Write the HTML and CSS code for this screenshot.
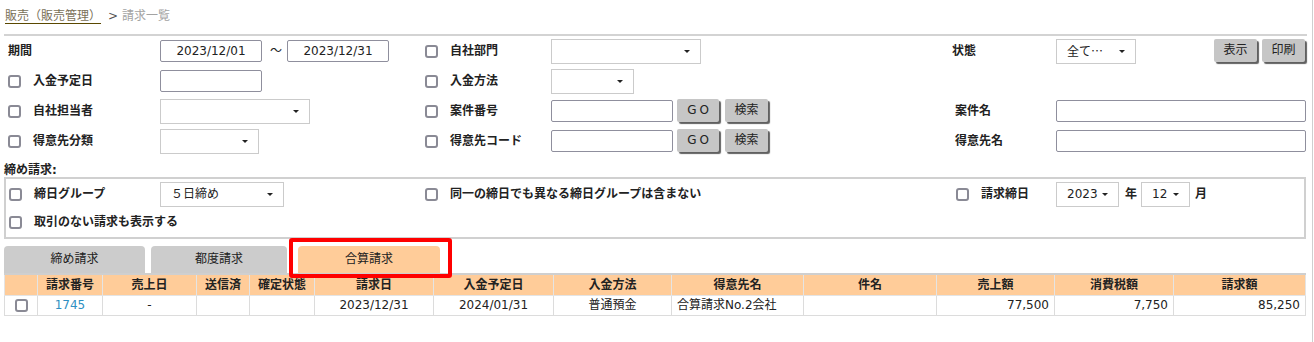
FILE: index.html
```html
<!DOCTYPE html>
<html lang="ja">
<head>
<meta charset="utf-8">
<title>請求一覧</title>
<link rel="stylesheet" href="styles.css">
</head>
<body>
<div class="page">
  <div class="crumbs">
    <a class="crumb-link">販売（販売管理）</a><span class="sep">&gt;</span><span class="crumb-cur">請求一覧</span>
  </div>
  <div class="rule"></div>

  <div class="filters">
    <!-- row 1 -->
    <div class="cell pad4"><span class="label">期間</span></div>
    <div class="cell">
      <div class="inp date">2023/12/01</div><span class="tilde">～</span><div class="inp date">2023/12/31</div>
    </div>
    <div class="cell pad4"><span class="chk"></span><span class="label">自社部門</span></div>
    <div class="cell"><div class="sel w150"></div></div>
    <div class="cell pad4"><span class="label">状態</span></div>
    <div class="cell between">
      <div class="sel w80"><span class="cjk">全て…</span></div>
      <div class="btns"><div class="btn w43">表示</div><div class="btn w43">印刷</div></div>
    </div>

    <!-- row 2 -->
    <div class="cell pad4"><span class="chk"></span><span class="label">入金予定日</span></div>
    <div class="cell"><div class="inp date"></div></div>
    <div class="cell pad4"><span class="chk"></span><span class="label">入金方法</span></div>
    <div class="cell"><div class="sel w83"></div></div>
    <div class="cell"></div>
    <div class="cell"></div>

    <!-- row 3 -->
    <div class="cell pad4"><span class="chk"></span><span class="label">自社担当者</span></div>
    <div class="cell"><div class="sel w150"></div></div>
    <div class="cell pad4"><span class="chk"></span><span class="label">案件番号</span></div>
    <div class="cell"><div class="inp w122"></div><div class="btn go">GO</div><div class="btn w43 search">検索</div></div>
    <div class="cell pad7"><span class="label">案件名</span></div>
    <div class="cell"><div class="inp wfull"></div></div>

    <!-- row 4 -->
    <div class="cell pad4"><span class="chk"></span><span class="label">得意先分類</span></div>
    <div class="cell"><div class="sel w99"></div></div>
    <div class="cell pad4"><span class="chk"></span><span class="label">得意先コード</span></div>
    <div class="cell"><div class="inp w122"></div><div class="btn go">GO</div><div class="btn w43 search">検索</div></div>
    <div class="cell pad7"><span class="label">得意先名</span></div>
    <div class="cell"><div class="inp wfull"></div></div>
  </div>

  <div class="section-title">締め請求:</div>
  <div class="closing">
    <div class="cell pad3"><span class="chk"></span><span class="label">締日グループ</span></div>
    <div class="cell"><div class="sel w124">５日締め</div></div>
    <div class="cell pad4 span2"><span class="chk"></span><span class="label">同一の締日でも異なる締日グループは含まない</span></div>
    <div class="cell pad8"><span class="chk"></span><span class="label">請求締日</span></div>
    <div class="cell">
      <div class="sel w63">2023</div><span class="label unit-y">年</span><div class="sel w49">12</div><span class="label unit-m">月</span>
    </div>
    <div class="cell pad3 span6"><span class="chk"></span><span class="label">取引のない請求も表示する</span></div>
  </div>

  <div class="tabs">
    <div class="tab t1">締め請求</div>
    <div class="tab t2">都度請求</div>
    <div class="tab t3 active">合算請求<span class="highlight"></span></div>
  </div>

  <table class="list">
    <colgroup>
      <col class="c33"><col class="c65"><col class="c94"><col class="c53"><col class="c65">
      <col class="c119"><col class="c120"><col class="c118"><col class="c132"><col class="c133">
      <col class="c118"><col class="c119"><col class="c132">
    </colgroup>
    <thead>
      <tr>
        <th></th><th>請求番号</th><th>売上日</th><th>送信済</th><th>確定状態</th><th>請求日</th><th>入金予定日</th><th>入金方法</th><th>得意先名</th><th>件名</th><th>売上額</th><th>消費税額</th><th>請求額</th>
      </tr>
    </thead>
    <tbody>
      <tr>
        <td class="ctr"><span class="chk inrow"></span></td>
        <td class="ctr"><a class="link">1745</a></td>
        <td class="ctr">-</td>
        <td></td>
        <td></td>
        <td class="ctr">2023/12/31</td>
        <td class="ctr">2024/01/31</td>
        <td class="ctr">普通預金</td>
        <td>合算請求No.2会社</td>
        <td></td>
        <td class="num">77,500</td>
        <td class="num">7,750</td>
        <td class="num">85,250</td>
      </tr>
    </tbody>
  </table>
</div>
</body>
</html>
```
FILE: styles.css
```css
* { box-sizing: border-box; }
html, body { margin: 0; padding: 0; background: #fff; }
body {
  font-family: "DejaVu Sans", "Noto Sans CJK JP", sans-serif;
  font-size: 12px;
  color: #222;
  line-height: 1.2;
}
.cjk { font-family: "Noto Sans CJK JP", sans-serif; }

.page {
  width: 1313px;
  min-height: 342px;
  padding: 0 6px 0 4px;
  border-right: 1px solid #cfcfcf;
}

/* breadcrumb */
.crumbs {
  height: 34px;
  display: flex;
  align-items: center;
  padding-left: 1px;
  padding-bottom: 1px;
}
.crumb-link {
  color: #7a7058;
  text-decoration: underline;
  text-decoration-color: #5a4800;
  text-underline-offset: 3px;
}
.sep { color: #555; margin: 0 4px 0 7px; }
.crumb-cur { color: #a3a3a3; }

.rule { height: 2px; background: #d3d3d3; margin-right: -1px; }

/* filter grid */
.filters {
  display: grid;
  grid-template-columns: 156px 261px 130px 397px 108px 250px;
  grid-auto-rows: 30px;
}
.cell { display: flex; align-items: center; min-width: 0; white-space: nowrap; }
.pad3 { padding-left: 3px; }
.pad4 { padding-left: 4px; }
.pad7 { padding-left: 7px; }
.pad8 { padding-left: 8px; }
.span2 { grid-column: span 2; }
.span6 { grid-column: 1 / -1; }
.between { justify-content: space-between; }
.label { font-weight: bold; }

.chk {
  width: 13px;
  height: 13px;
  border: 2px solid #8a8a95;
  border-radius: 3px;
  background: #fff;
  flex: none;
  margin-right: 12px;
  display: inline-block;
}
.chk.inrow { margin: 0; vertical-align: middle; }

.inp {
  height: 22px;
  border: 1px solid #8f8f9d;
  border-radius: 2px;
  background: #fff;
  display: flex;
  align-items: center;
  padding: 0 4px;
}
.date { width: 102px; justify-content: center; }
.w122 { width: 122px; }
.wfull { width: 250px; }
.tilde { width: 25px; text-align: center; padding-left: 3px; }

.sel {
  height: 25px;
  border: 1px solid #cbcbcb;
  background: #fff;
  position: relative;
  padding-left: 10px;
  display: flex;
  align-items: center;
}
.sel::after {
  content: "";
  position: absolute;
  right: 10px;
  top: 50%;
  margin-top: -1px;
  border-left: 3px solid transparent;
  border-right: 3px solid transparent;
  border-top: 3px solid #222;
}
.w150 { width: 150px; }
.w83 { width: 83px; }
.w99 { width: 99px; }
.w80 { width: 80px; }
.w124 { width: 124px; }
.w63 { width: 63px; }
.w49 { width: 49px; }
.unit-y { margin: 0 4px 0 6px; }
.unit-m { margin-left: 5px; }

.btns { display: flex; gap: 5px; margin-right: 1px; }
.btn {
  height: 23px;
  background: #c6c6c6;
  border-radius: 2px;
  box-shadow: 2px 2px 1px #606060;
  display: flex;
  align-items: center;
  justify-content: center;
  color: #222;
  margin-top: -2px;
}
.w43 { width: 43px; }
.go { width: 42px; margin-left: 4px; letter-spacing: 3px; padding-left: 3px; }
.search { margin-left: 6px; }

/* closing section */
.section-title {
  height: 21px;
  padding-top: 7px;
  line-height: 14px;
  font-weight: bold;
}
.closing {
  border: 2px solid #d0d0d0;
  padding-top: 2px;
  display: grid;
  grid-template-columns: 154px 261px 130px 397px 108px 248px;
  grid-template-rows: 26px 30px;
}

/* tabs */
.tabs {
  display: flex;
  align-items: flex-end;
  margin-top: 7px;
  height: 29px;
  border-bottom: 2px solid #cfcfcf;
}
.tab {
  height: 27px;
  background: #cccccc;
  border-radius: 4px 4px 0 0;
  display: flex;
  align-items: center;
  justify-content: center;
  color: #222;
}
.t1 { width: 141px; margin-right: 6px; }
.t2 { width: 136px; margin-right: 11px; }
.t3 { width: 142px; }
.tab.active { background: #ffcc99; position: relative; }
.highlight {
  position: absolute;
  left: -9px;
  top: -8px;
  width: 163px;
  height: 40px;
  border: 4px solid #ff0000;
  border-radius: 3px;
  pointer-events: none;
}

/* table */
.list {
  border-collapse: collapse;
  table-layout: fixed;
  width: 1301px;
}
.c33 { width: 33px; } .c65 { width: 65px; } .c94 { width: 94px; } .c53 { width: 53px; }
.c119 { width: 119px; } .c120 { width: 120px; } .c118 { width: 118px; } .c132 { width: 132px; }
.c133 { width: 133px; }
.list th {
  background: #ffcc99;
  height: 20px;
  font-weight: bold;
  border: 1px solid #e4e4e4;
  border-top: none;
  padding: 0;
  text-align: center;
}
.list td {
  height: 20px;
  border: 1px solid #dcdcdc;
  padding: 0 5px;
  white-space: nowrap;
}
.list td.ctr { text-align: center; padding: 0; }
.list td.num { text-align: right; }
.link { color: #2e8fc2; }
```
